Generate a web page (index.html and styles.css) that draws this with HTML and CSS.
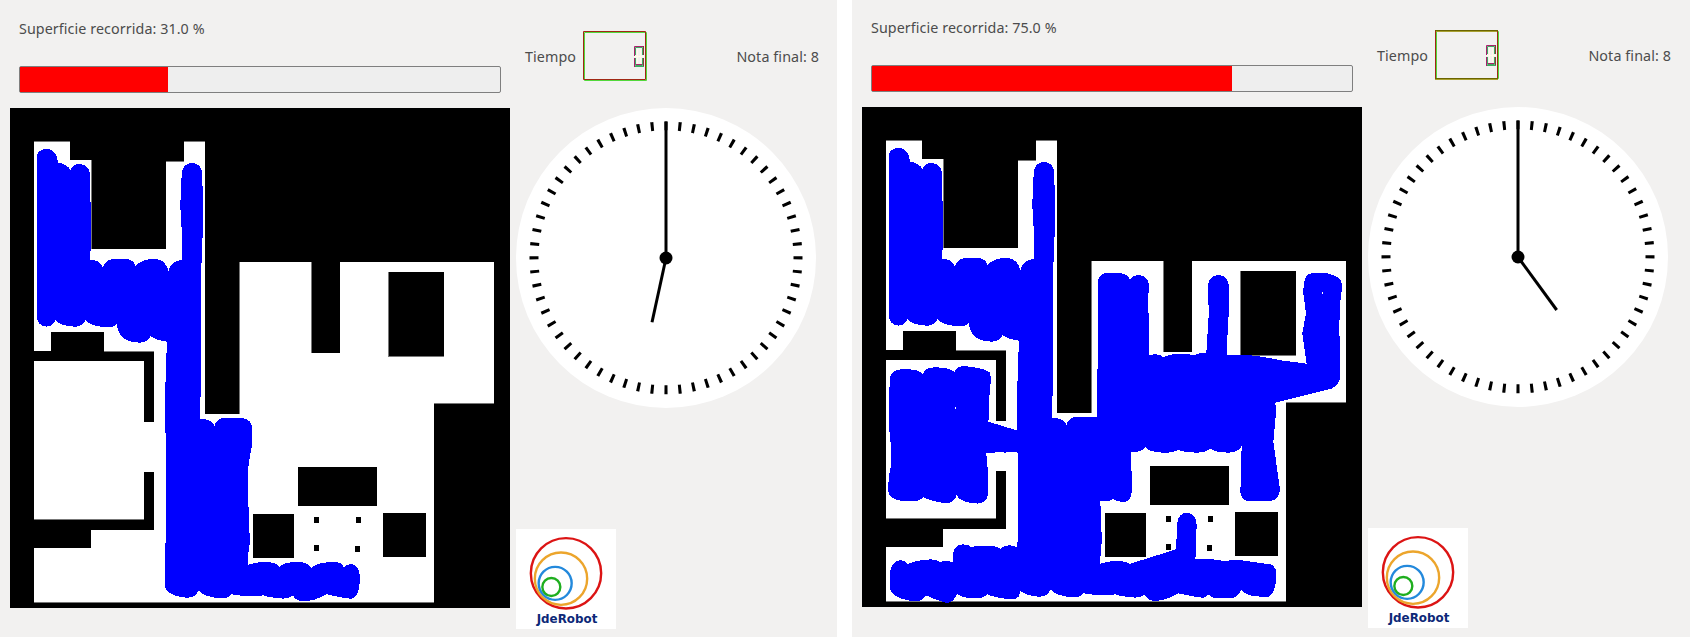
FILE: index.html
```html
<!DOCTYPE html>
<html lang="es">
<head>
<meta charset="utf-8">
<title>Superficie recorrida</title>
<link rel="stylesheet" href="styles.css">
</head>
<body>
<svg class="defs" width="0" height="0" aria-hidden="true">
  <defs>
    <g id="house">
      <rect x="30" y="324" width="1500" height="1500" fill="#000"/>
      <path fill="#fff" d="M102 426H210V480H273V747H498V486H552V426H615V1242H720V786H934V1059H1020V786H1482V1209H1302V1806H102V1644H273V1590H462V1416H432V1557H102V1083H432V1266H462V1056H312V996H153V1053H102Z"/>
      <path fill="none" stroke="#777" stroke-width="3" d="M102 424.500H210M552 424.500H615M274.500 480V747M498 484.500H552M718.500 786V1242M935.500 786V1059M312 1054.500H462M102 1558.500H432M102 1807.500H1302M1302 1210.500H1482"/>
      <path fill="#000" d="M1167 816H1332V1068H1167ZM894 1401H1131V1518H894ZM760 1542H882V1674H760ZM1149 1539H1278V1670H1149ZM942 1551h16v18h-16zM1068 1551h15v18h-15zM942 1635h16v18h-16zM1065 1638h16v18h-16z"/>
      <path fill="none" stroke="#777" stroke-width="3" d="M1165.500 816V1070M1167 1069.500H1332"/>
    </g>
    <path id="sweep" d="M111 468Q114 447 141 447Q170 449 174 489Q200 490 211 510Q218 492 239 492Q266 493 270 522V605H273V752H270V780Q302 780 308 802Q316 777 345 777H380Q402 780 406 798Q425 777 462 777Q496 777 505 813Q512 782 546 780V680H543V630H540V600H543V535H546V515Q552 489 576 489Q600 489 606 515V558H609V714H606V789H603V1190H600V1257Q638 1257 643 1278Q650 1254 675 1254H725Q756 1257 756 1285V1335Q747 1380 744 1410V1520H747V1600H750V1625L744 1665V1695Q765 1686 800 1686Q832 1688 838 1701Q850 1686 895 1686Q925 1686 934 1705Q950 1686 1005 1686Q1024 1686 1031 1701Q1055 1684 1070 1700Q1082 1715 1079 1745Q1077 1796 1051 1796Q1005 1790 980 1782Q945 1804 905 1804Q884 1800 880 1786Q860 1800 835 1794Q805 1792 790 1786Q765 1794 695 1783Q680 1798 660 1795Q605 1789 597 1770Q585 1795 560 1793Q505 1788 496 1762V1630L499 1620V1300H496V1145H499V1058H502V1025Q465 1020 451 1008Q446 1028 418 1028Q352 1026 351 968Q345 984 322 982Q268 978 257 960Q247 982 222 980Q175 976 166 960Q158 980 139 980Q113 976 111 955Z"/>
    <g id="dial">
      <circle cx="150" cy="150" r="150" fill="#fff"/>
      <circle cx="150" cy="149.800" r="132" fill="none" stroke="#000" stroke-width="9" pathLength="829.200" stroke-dasharray="3.100 10.720" stroke-dashoffset="1.550"/>
      <path d="M150 150V14" stroke="#000" stroke-width="3"/>
      <circle cx="150" cy="150" r="6.500"/>
    </g>
    <g id="brand">
      <rect width="300" height="300" fill="#fff"/>
      <g fill="none" stroke-width="7.200">
        <circle cx="150" cy="133" r="105.500" stroke="#dc1414"/>
        <circle cx="135" cy="149" r="78.500" stroke="#eca52c"/>
        <circle cx="117.500" cy="163" r="49.500" stroke="#2389dc"/>
        <circle cx="106" cy="174" r="27" stroke="#1fae1f"/>
      </g>
      <text class="brand-name" x="62" y="281" textLength="182" lengthAdjust="spacingAndGlyphs">JdeRobot</text>
    </g>
    <g id="zero">
      <path fill="none" stroke="#3fa860" d="M52.500 24V16.500H59.500V24M52.500 27V34.500H59.500V27M51 35.500H61"/>
      <path fill="none" stroke="#a8206c" d="M51.500 25V15.500H60M51.500 27V36M53 33.500H59"/>
      <path fill="none" stroke="#8a3a34" d="M60.500 15V24M60.500 27V35"/>
      <path fill="none" stroke="#fffbe8" d="M51 25.500H61M54.500 18V33M57.500 18V33"/>
    </g>
  </defs>
</svg>
<main class="screens">
  <section class="panel">
    <div class="coverage">
      <header class="coverage-head">
        <p class="label covered">Superficie recorrida: 31.0 %</p>
        <div class="bar"><div class="bar-fill" style="width:148px"></div></div>
      </header>
      <svg class="map" viewBox="30 324 1500 1500" shape-rendering="crispEdges">
        <use href="#house"/>
        <use href="#sweep" fill="#00f"/>
      </svg>
    </div>
    <aside class="side">
      <header class="side-head">
        <span class="label time">Tiempo</span>
        <svg class="lcd" viewBox="0 0 64 50">
          <path fill="none" stroke="#52d83c" d="M1.500 1.500H63.500V49.500H1.500Z"/>
          <path fill="none" stroke="#a02814" d="M.5 .5H62.500V48.500H.5Z"/>
          <use href="#zero"/>
        </svg>
        <span class="label grade">Nota final: 8</span>
      </header>
      <svg class="clock" viewBox="0 0 300 300">
        <use href="#dial"/>
        <path d="M150 150L136 214.300" stroke="#000" stroke-width="3"/>
      </svg>
      <svg class="logo" viewBox="0 0 300 300"><use href="#brand"/></svg>
    </aside>
  </section>
  <section class="panel panel-late">
    <div class="coverage">
      <header class="coverage-head">
        <p class="label covered">Superficie recorrida: 75.0 %</p>
        <div class="bar"><div class="bar-fill" style="width:360px"></div></div>
      </header>
      <svg class="map" viewBox="30 324 1500 1500" shape-rendering="crispEdges">
        <use href="#house"/>
        <use href="#sweep" fill="#00f"/>
        <g transform="translate(-6 933)" fill="#00f">
          <path d="M120 205Q122 178 160 178Q205 176 219 192Q222 173 255 172Q300 172 313 186Q322 166 350 169Q415 177 421 190Q424 225 418 260V300L415 335L510 364V428Q480 426 463 428Q448 424 440 427Q425 429 409 430L415 500Q417 560 408 570Q396 583 375 580Q330 577 320 555Q312 582 285 580Q250 575 219 562Q205 576 180 574Q120 574 115 545Q113 510 122 470L123 410L116 340L118 240Z"/>
          <path d="M120 790Q122 755 150 750Q165 752 173 762Q200 750 245 748Q262 750 272 757Q285 748 309 757V730Q315 703 340 703Q358 705 364 712Q385 704 440 710L451 717Q460 706 480 706Q495 708 510 715V850Q505 870 480 868Q430 862 412 853Q400 866 370 865Q335 864 322 852Q310 877 292 879Q265 873 228 856Q215 875 195 874Q125 866 120 835Z"/>
          <path d="M670 322H741V180L744 175V-90Q750 -108 765 -111H810Q835 -108 840 -91Q850 -105 866 -105Q894 -102 897 -75V-50H894V10H897V136Q925 128 940 141Q965 130 1000 132Q1022 132 1032 137Q1045 127 1069 129L1077 0L1074 -30V-75Q1080 -105 1106 -105Q1134 -102 1136 -75V20H1134L1131 135Q1200 133 1240 141L1300 152L1370 161L1357 70L1368 10L1360 -50Q1360 -95 1372 -105Q1385 -114 1430 -111Q1470 -100 1474 -85Q1478 -60 1470 -20V10L1466 60L1470 90V205Q1465 225 1445 236L1276 278L1278 310L1270 395L1290 540Q1288 568 1262 573H1190Q1174 568 1171 548L1175 408Q1165 428 1135 428Q1090 427 1080 415Q1070 428 1040 428Q1000 426 984 420Q965 430 945 428Q895 427 886 410Q880 427 843 427L846 540Q843 577 820 576Q800 574 789 567Q780 575 751 573L755 680L750 765H670Z"/>
          <path d="M740 765H750Q770 754 800 754Q830 754 838 762L978 718L982 640Q984 610 1010 608Q1040 612 1040 645L1037 740L1032 748Q1100 745 1120 754Q1160 747 1195 754L1265 764Q1282 775 1279 800Q1275 855 1255 860Q1185 862 1174 838Q1165 865 1140 865H1100Q1082 862 1078 853Q1060 866 984 850Q950 872 910 873Q888 868 884 853L740 845Z"/>
          <path fill="#fff" d="M315 291h3v6h-3zM1416 -54h3v6h-3z"/>
        </g>
      </svg>
    </div>
    <aside class="side">
      <header class="side-head">
        <span class="label time">Tiempo</span>
        <svg class="lcd" viewBox="0 0 64 50">
          <path fill="none" stroke="#52d83c" d="M1.500 1.500H63.500V48.500H1.500Z"/>
          <path fill="none" stroke="#a02814" d="M.5 .5V49.500M62.500 .5V49.500"/>
          <path fill="none" stroke="#6b6400" d="M0 .5H63M0 48.500H63"/>
          <path fill="none" stroke="#a8a030" d="M1 1.500H62M0 49.500H63"/>
          <use href="#zero"/>
        </svg>
        <span class="label grade">Nota final: 8</span>
      </header>
      <svg class="clock" viewBox="0 0 300 300">
        <use href="#dial"/>
        <path d="M150 150L188.700 203" stroke="#000" stroke-width="3"/>
      </svg>
      <svg class="logo" viewBox="0 0 300 300"><use href="#brand"/></svg>
    </aside>
  </section>
</main>
</body>
</html>
```
FILE: styles.css
```css
* { box-sizing: border-box; }

body {
  margin: 0;
  background: #fff;
  font-family: "Noto Sans", "Open Sans", sans-serif;
  overflow: hidden;
}

svg { display: block; }
.defs { position: absolute; }

.screens {
  display: grid;
  grid-template-columns: 837px 838px;
  column-gap: 15px;
  height: 637px;
}

.panel {
  display: flex;
  gap: 6px;
  padding-left: 10px;
  background: #f2f1f0;
}

.panel-late > * { margin-top: -1px; }

.coverage { width: 500px; }

.coverage-head {
  height: 108px;
  padding: 19px 9px 0;
}

.label {
  margin: 0;
  font-size: 14.3px;
  line-height: 20px;
  color: #4c4c4c;
  white-space: nowrap;
}

.covered { letter-spacing: 0.08px; }
.time, .grade { letter-spacing: 0.1px; }

.bar {
  width: 482px;
  height: 27px;
  margin-top: 27px;
  border: 1px solid #7f7f7f;
  border-radius: 2px;
  background: #eee;
}

.bar-fill {
  height: 100%;
  background: #f00;
}

.map { width: 500px; height: 500px; }

.side { width: 304px; }

.side-head {
  display: flex;
  align-items: flex-start;
  height: 108px;
  padding: 31px 1px 0 9px;
}

.side-head .label { margin-top: 16px; }
.time { width: 58px; }
.lcd { width: 64px; height: 50px; }
.grade { margin-left: auto; }

.clock { width: 300px; height: 300px; }

.logo {
  width: 100px;
  height: 100px;
  margin-top: 121px;
}

.brand-name {
  font: bold 35px "DejaVu Sans", sans-serif;
  fill: #0c2878;
}
```
